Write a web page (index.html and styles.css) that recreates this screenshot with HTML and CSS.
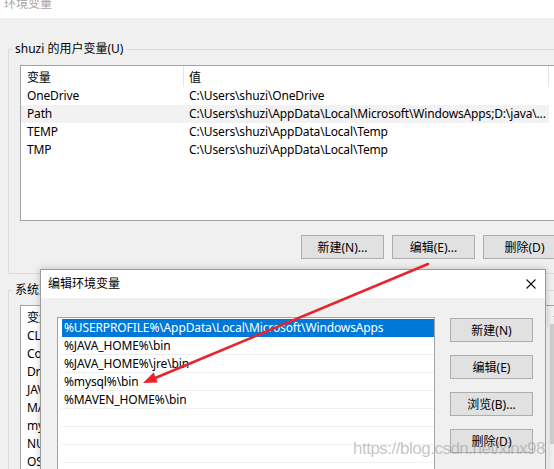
FILE: index.html
```html
<!DOCTYPE html>
<html lang="zh-CN">
<head>
<meta charset="utf-8">
<title>环境变量</title>
<link rel="stylesheet" href="styles.css">
</head>
<body>
<div class="screen">
  <div class="main">
    <div class="titlebar">环境变量</div>
    <div class="mainbody">
      <fieldset class="group g1">
        <legend>shuzi 的用户变量(U)</legend>
        <div class="list l1">
          <div class="hdr"><span class="c1">变量</span><span class="c2">值</span></div>
          <div class="row"><span class="c1">OneDrive</span><span class="c2">C:\Users\shuzi\OneDrive</span></div>
          <div class="row hot"><span class="c1">Path</span><span class="c2">C:\Users\shuzi\AppData\Local\Microsoft\WindowsApps;D:\java\...</span></div>
          <div class="row"><span class="c1">TEMP</span><span class="c2">C:\Users\shuzi\AppData\Local\Temp</span></div>
          <div class="row"><span class="c1">TMP</span><span class="c2">C:\Users\shuzi\AppData\Local\Temp</span></div>
        </div>
        <div class="btns">
          <button class="btn">新建(N)...</button>
          <button class="btn">编辑(E)...</button>
          <button class="btn">删除(D)</button>
        </div>
      </fieldset>
      <fieldset class="group g2">
        <legend>系统变量(S)</legend>
        <div class="list l2">
          <div class="l2content">
            <div class="hdr"><span class="c1">变量</span><span class="c2">值</span></div>
            <div class="row"><span class="c1">CLASSPATH</span><span class="c2">.;%JAVA_HOME%\lib\dt.jar;%JAVA_HOME%\lib\tools.jar</span></div>
            <div class="row"><span class="c1">ComSpec</span><span class="c2">C:\Windows\system32\cmd.exe</span></div>
            <div class="row"><span class="c1">DriverData</span><span class="c2">C:\Windows\System32\Drivers\DriverData</span></div>
            <div class="row"><span class="c1">JAVA_HOME</span><span class="c2">D:\java\jdk1.8</span></div>
            <div class="row"><span class="c1">MAVEN_HOME</span><span class="c2">D:\maven\apache-maven-3.6.3</span></div>
            <div class="row"><span class="c1">mysql</span><span class="c2">D:\mysql\mysql-8.0</span></div>
            <div class="row"><span class="c1">NUMBER_OF_PROCESSORS</span><span class="c2">8</span></div>
            <div class="row"><span class="c1">OS</span><span class="c2">Windows_NT</span></div>
          </div>
          <div class="vscroll">
            <div class="sarrow"><svg width="7" height="4" viewBox="0 0 7 4"><path d="M0.5 3.5 L3.5 0.5 L6.5 3.5" fill="none" stroke="#606060" stroke-width="1"/></svg></div>
            <div class="sthumb"></div>
          </div>
        </div>
      </fieldset>
    </div>
  </div>

  <div class="dialog">
    <div class="dtitle">
      <span class="dtitle-text">编辑环境变量</span>
      <svg class="dclose" width="10" height="10" viewBox="0 0 10 10"><path d="M0.5 0.5 L9.5 9.5 M9.5 0.5 L0.5 9.5" stroke="#111" stroke-width="1.1" fill="none"/></svg>
    </div>
    <div class="dbody">
      <div class="dlist">
        <div class="ditem sel">%USERPROFILE%\AppData\Local\Microsoft\WindowsApps</div>
        <div class="ditem">%JAVA_HOME%\bin</div>
        <div class="ditem">%JAVA_HOME%\jre\bin</div>
        <div class="ditem">%mysql%\bin</div>
        <div class="ditem">%MAVEN_HOME%\bin</div>
        <div class="ditem"></div>
        <div class="ditem"></div>
        <div class="ditem"></div>
        <div class="ditem"></div>
      </div>
      <div class="dbtns">
        <button class="btn">新建(N)</button>
        <button class="btn">编辑(E)</button>
        <button class="btn">浏览(B)...</button>
        <button class="btn">删除(D)</button>
      </div>
    </div>
  </div>

  <svg class="arrow" width="554" height="469" viewBox="0 0 554 469">
    <line x1="428" y1="264" x2="154" y2="378.5" stroke="#e8232a" stroke-width="2.5" stroke-linecap="round"/>
    <polygon points="143,383 157.8,382.6 153.6,372.4" fill="#e8232a"/>
  </svg>

  <div class="watermark">https://blog.csdn.net/xinx98</div>
</div>
</body>
</html>
```
FILE: styles.css
```css
* { box-sizing: border-box; }
html, body { margin: 0; padding: 0; }
body {
  width: 554px;
  height: 469px;
  overflow: hidden;
  background: #f0f0f0;
  font-family: "Noto Sans", "Noto Sans CJK SC", sans-serif;
  font-size: 12px;
  color: #000;
}
.screen {
  position: relative;
  width: 554px;
  height: 469px;
  overflow: hidden;
}
.main { width: 600px; }
.titlebar {
  height: 18px;
  background: #fff;
  color: #a6a6a6;
  padding-left: 4px;
  line-height: 8px;
}
.mainbody { padding: 23px 0 0 8px; }

.group {
  margin: 0;
  width: 570px;
  min-width: 0;
  border: 1px solid #dcdcdc;
  padding: 8px 11px 14px 11px;
}
.group legend {
  padding: 0 3px;
  margin-left: -8px;
  line-height: 16px;
}
.g2 { margin-top: 8px; padding-top: 7px; }

.list {
  background: #fff;
  border: 1px solid #a3a3a3;
  white-space: nowrap;
  overflow: hidden;
  letter-spacing: -0.15px;
}
.l1 { height: 156px; }
.l2 { height: 200px; display: flex; }
.l2content { flex: 1; min-width: 0; }

.hdr { display: flex; height: 21px; }
.hdr .c1, .hdr .c2 {
  padding-top: 3px;
  line-height: 18px;
  border-right: 1px solid #e5e5e5;
}
.hdr .c1 { width: 163px; padding-left: 6px; }
.hdr .c2 { width: 365px; padding-left: 5px; }

.row { display: flex; height: 18px; line-height: 18px; width: 528px; }
.row .c1 { width: 163px; padding-left: 6px; overflow: hidden; }
.row .c2 { width: 364px; padding-left: 5px; overflow: hidden; }
.row.hot { background: #f2f2f2; }

.btns {
  display: flex;
  justify-content: flex-end;
  gap: 8px;
  margin-top: 14px;
}
.btn {
  width: 83px;
  height: 24px;
  margin: 0;
  padding: 0;
  background: #e1e1e1;
  border: 1px solid #adadad;
  border-radius: 0;
  font-family: inherit;
  font-size: 12px;
  color: #000;
  white-space: nowrap;
}

.vscroll {
  width: 17px;
  background: #f0f0f0;
  display: flex;
  flex-direction: column;
  align-items: center;
}
.sarrow {
  height: 17px;
  display: flex;
  align-items: center;
  justify-content: center;
}
.sarrow svg { display: block; }
.sthumb {
  width: 13px;
  height: 120px;
  margin-top: 1px;
  background: #cdcdcd;
}

/* dialog window floating over the main window */
.dialog {
  position: absolute;
  left: 40px;
  top: 269px;
  width: 506px;
  height: 230px;
  background: #f0f0f0;
  border: 1px solid #9c9c9c;
  box-shadow: 0 0 7px rgba(0, 0, 0, 0.22);
}
.dtitle {
  height: 28px;
  background: #fff;
  display: flex;
  align-items: center;
  padding-left: 7px;
  padding-right: 9px;
}
.dtitle-text { flex: 1; line-height: 28px; }
.dclose { display: block; }
.dbody {
  display: flex;
  padding: 19px 12px 0 16px;
}
.dlist {
  width: 378px;
  height: 200px;
  background: #fff;
  border: 1px solid #a3a3a3;
  padding: 1px 0 0 4px;
  white-space: nowrap;
  overflow: hidden;
  letter-spacing: -0.12px;
}
.ditem {
  height: 18px;
  line-height: 17px;
  padding-left: 2px;
  border-bottom: 1px solid #f0f0f0;
}
.ditem.sel {
  background: #0078d7;
  color: #fff;
  border-bottom-color: #0078d7;
}
.dbtns {
  margin-left: auto;
  margin-top: 1px;
  display: flex;
  flex-direction: column;
  gap: 13px;
}

.arrow {
  position: absolute;
  left: 0;
  top: 0;
  pointer-events: none;
}
.watermark {
  position: absolute;
  left: 353px;
  top: 439px;
  font-family: "Liberation Sans", Arial, sans-serif;
  font-size: 17px;
  line-height: 20px;
  letter-spacing: -0.5px;
  color: rgba(150, 150, 150, 0.55);
  white-space: nowrap;
  pointer-events: none;
}
```
